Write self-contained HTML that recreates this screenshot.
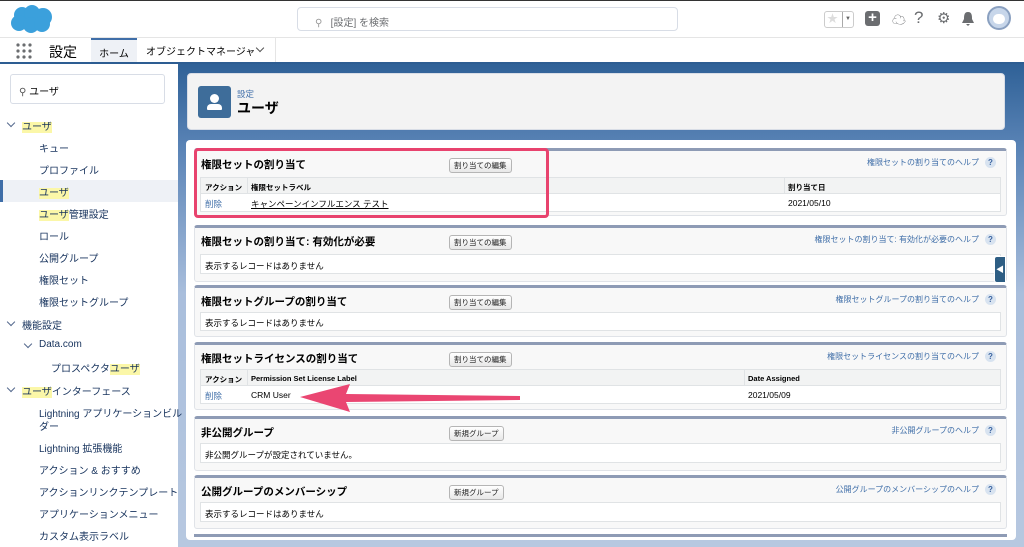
<!DOCTYPE html>
<html><head><meta charset="utf-8"><style>
*{box-sizing:border-box;margin:0;padding:0}
body{width:1024px;height:547px;overflow:hidden;font-family:"Liberation Sans","Noto Sans CJK JP",sans-serif;color:#16325c;background:#fff;position:relative}
.a{position:absolute}
.hl{background:#fbf7a8}
.side div.i{position:absolute;font-size:10px;color:#16325c;white-space:nowrap}
.chev{position:absolute;width:6px;height:6px;border-right:1px solid #54698d;border-bottom:1px solid #54698d;transform:rotate(45deg)}
.sec{position:absolute;left:194px;width:813px;background:#f8f8f8;border-top:3px solid #8e9bb5;border-radius:3px;border-left:1px solid #e0e3e8;border-right:1px solid #e0e3e8;border-bottom:1px solid #e0e3e8}
.sec .t{position:absolute;left:6px;top:6px;font-size:10.5px;font-weight:bold;color:#000}
.sec .b{position:absolute;left:254px;top:7px;font-size:7.5px;color:#222;border:1px solid #b5b5b5;border-radius:3px;background:linear-gradient(#fff,#e8e8e8);padding:1px 4px}
.sec .h{position:absolute;right:10px;top:6px;font-size:8px;color:#3f6ea8}
.sec .h span{display:inline-block;width:11px;height:11px;border-radius:6px;background:#d8e3f0;color:#3a64a0;font-size:8px;text-align:center;line-height:11px;margin-left:6px;font-weight:bold}
.tb{position:absolute;left:5px;right:5px;border:1px solid #e0e3e5;background:#fff;font-size:8.5px;color:#000}
.tb .hd{background:#f2f3f3;height:16px;border-bottom:1px solid #e0e3e5;font-weight:bold;font-size:7.5px;position:relative}
.tb .rw{height:17px;position:relative}
.tb span{position:absolute;top:4px}
</style></head><body>
<div class="a" style="left:0;top:0;width:1024px;height:1px;background:#333"></div>
<svg class="a" style="left:10px;top:4px" width="44" height="30" viewBox="0 0 44 30"><g fill="#3ba0dc"><circle cx="12" cy="11" r="8"/><circle cx="22" cy="9" r="8"/><circle cx="33" cy="13" r="9"/><circle cx="9" cy="19" r="8"/><circle cx="21" cy="21" r="8"/><circle cx="32" cy="20" r="8"/></g></svg>
<div class="a" style="left:297px;top:7px;width:381px;height:24px;border:1px solid #d8dde6;border-radius:4px;font-size:10px;color:#6b6d70;padding:6px 0 0 17px"><span style="color:#999">⚲</span>&nbsp;&nbsp;&nbsp;[設定] を検索</div>
<div class="a" style="left:824px;top:11px;width:30px;height:17px;border:1px solid #ccc;border-radius:3px;font-size:11px;color:#ddd;padding-left:2px;line-height:15px">★<span style="position:absolute;right:0;top:0;width:11px;height:15px;border-left:1px solid #aaa;color:#666;font-size:6px;text-align:center">▼</span></div>
<div class="a" style="left:865px;top:11px;width:15px;height:15px;background:#6b6d70;border-radius:3px;color:#fff;font-size:15px;line-height:14px;text-align:center;font-weight:bold">+</div>
<div class="a" style="left:892px;top:10px;font-size:14px;color:#6b6d70">☁</div>
<div class="a" style="left:914px;top:8px;font-size:17px;color:#6b6d70">?</div>
<div class="a" style="left:937px;top:9px;font-size:15px;color:#6b6d70">⚙</div>
<svg class="a" style="left:961px;top:11px" width="14" height="16"><path d="M7 1 C3 1 3 5 3 8 L1 12 L13 12 L11 8 C11 5 11 1 7 1Z M5 13 L9 13 L7 15Z" fill="#6b6d70"/></svg>
<div class="a" style="left:987px;top:6px;width:24px;height:24px;border-radius:12px;background:#c7d6ea;border:2px solid #8aa0c0"><div style="margin:6px auto 0;width:12px;height:10px;background:#fff;border-radius:5px"></div></div>
<div class="a" style="left:0;top:37px;width:1024px;height:1px;background:#e5e5e5"></div>
<svg class="a" style="left:16px;top:43px" width="16" height="16"><g fill="#6b6d70"><circle cx="2" cy="2" r="1.6"/><circle cx="8" cy="2" r="1.6"/><circle cx="14" cy="2" r="1.6"/><circle cx="2" cy="8" r="1.6"/><circle cx="8" cy="8" r="1.6"/><circle cx="14" cy="8" r="1.6"/><circle cx="2" cy="14" r="1.6"/><circle cx="8" cy="14" r="1.6"/><circle cx="14" cy="14" r="1.6"/></g></svg>
<div class="a" style="left:49px;top:42px;font-size:14px;color:#000">設定</div>
<div class="a" style="left:91px;top:38px;width:46px;height:25px;background:#eef1f6;border-top:2px solid #3f6ea8;font-size:10px;color:#000;text-align:center;padding-top:5px">ホーム</div>
<div class="a" style="left:146px;top:43px;font-size:10px;color:#000">オブジェクトマネージャ</div>
<div class="a" style="left:257px;top:45px;width:6px;height:6px;border-right:1px solid #555;border-bottom:1px solid #555;transform:rotate(45deg)"></div>
<div class="a" style="left:275px;top:38px;width:1px;height:25px;background:#e5e5e5"></div>
<div class="a" style="left:0;top:62px;width:1024px;height:2px;background:#2d5d92"></div>
<div class="a" style="left:178px;top:64px;width:846px;height:483px;background:linear-gradient(180deg,#2f6197 0px,#5d86b8 90px,#a9bedc 230px,#b7c8e0 483px)"></div>
<div class="a side" style="left:0;top:64px;width:178px;height:483px;background:#fff">
<div class="a" style="left:10px;top:10px;width:155px;height:30px;border:1px solid #d8dde6;border-radius:3px;font-size:10px;color:#000;padding:8px 0 0 8px"><span style="color:#555">⚲</span> ユーザ</div>
<div class="a" style="left:0;top:116px;width:178px;height:22px;background:#eef1f6"></div>
<div class="a" style="left:0;top:116px;width:3px;height:22px;background:#3f6ea8"></div>
<div class="chev" style="left:8px;top:56px"></div><div class="i" style="left:22px;top:54px"><span class="hl">ユーザ</span></div>
<div class="i" style="left:39px;top:76px">キュー</div>
<div class="i" style="left:39px;top:98px">プロファイル</div>
<div class="i" style="left:39px;top:120px"><span class="hl">ユーザ</span></div>
<div class="i" style="left:39px;top:142px"><span class="hl">ユーザ</span>管理設定</div>
<div class="i" style="left:39px;top:164px">ロール</div>
<div class="i" style="left:39px;top:186px">公開グループ</div>
<div class="i" style="left:39px;top:208px">権限セット</div>
<div class="i" style="left:39px;top:230px">権限セットグループ</div>
<div class="chev" style="left:8px;top:255px"></div><div class="i" style="left:22px;top:253px">機能設定</div>
<div class="chev" style="left:25px;top:277px"></div><div class="i" style="left:39px;top:275px">Data.com</div>
<div class="i" style="left:51px;top:296px">プロスペクタ<span class="hl">ユーザ</span></div>
<div class="chev" style="left:8px;top:321px"></div><div class="i" style="left:22px;top:319px"><span class="hl">ユーザ</span>インターフェース</div>
<div class="i" style="left:39px;top:341px">Lightning アプリケーションビル</div>
<div class="i" style="left:39px;top:354px">ダー</div>
<div class="i" style="left:39px;top:376px">Lightning 拡張機能</div>
<div class="i" style="left:39px;top:398px">アクション &amp; おすすめ</div>
<div class="i" style="left:39px;top:420px">アクションリンクテンプレート</div>
<div class="i" style="left:39px;top:442px">アプリケーションメニュー</div>
<div class="i" style="left:39px;top:464px">カスタム表示ラベル</div>
</div>
<div class="a" style="left:187px;top:73px;width:818px;height:57px;background:#f3f3f3;border:1px solid #d8dde6;border-radius:4px"></div>
<div class="a" style="left:198px;top:86px;width:33px;height:32px;background:#3e6d9a;border-radius:3px"><div style="position:absolute;left:12px;top:8px;width:9px;height:9px;border-radius:5px;background:#fff"></div><div style="position:absolute;left:9px;top:18px;width:15px;height:6px;border-radius:4px 4px 1px 1px;background:#fff"></div></div>
<div class="a" style="left:237px;top:88px;font-size:8.5px;color:#3f6ea8">設定</div>
<div class="a" style="left:237px;top:98px;font-size:14px;font-weight:bold;color:#000">ユーザ</div>
<div class="a" style="left:186px;top:140px;width:830px;height:400px;background:#fff;border-radius:4px"></div>
<div class="sec" style="top:148px;height:68px"><div class="t">権限セットの割り当て</div><div class="b">割り当ての編集</div><div class="h">権限セットの割り当てのヘルプ<span>?</span></div>
<div class="tb" style="top:26px"><div class="hd"><span style="left:4px">アクション</span><span style="left:46px;border-left:1px solid #e0e3e5;padding-left:3px;top:0;height:15px;padding-top:4px">権限セットラベル</span><span style="left:583px;border-left:1px solid #e0e3e5;padding-left:3px;top:0;height:15px;padding-top:4px">割り当て日</span></div><div class="rw"><span style="left:4px;color:#3f6ea8">削除</span><span style="left:50px;text-decoration:underline">キャンペーンインフルエンス テスト</span><span style="left:587px">2021/05/10</span></div></div></div>
<div class="sec" style="top:225px;height:57px"><div class="t">権限セットの割り当て: 有効化が必要</div><div class="b">割り当ての編集</div><div class="h">権限セットの割り当て: 有効化が必要のヘルプ<span>?</span></div>
<div class="tb" style="top:26px;height:20px"><span style="left:4px;top:5px">表示するレコードはありません</span></div></div>
<div class="sec" style="top:285px;height:52px"><div class="t">権限セットグループの割り当て</div><div class="b">割り当ての編集</div><div class="h">権限セットグループの割り当てのヘルプ<span>?</span></div>
<div class="tb" style="top:24px;height:19px"><span style="left:4px;top:4px">表示するレコードはありません</span></div></div>
<div class="sec" style="top:342px;height:68px"><div class="t">権限セットライセンスの割り当て</div><div class="b">割り当ての編集</div><div class="h">権限セットライセンスの割り当てのヘルプ<span>?</span></div>
<div class="tb" style="top:24px"><div class="hd"><span style="left:4px">アクション</span><span style="left:46px;border-left:1px solid #e0e3e5;padding-left:3px;top:0;height:15px;padding-top:4px">Permission Set License Label</span><span style="left:543px;border-left:1px solid #e0e3e5;padding-left:3px;top:0;height:15px;padding-top:4px">Date Assigned</span></div><div class="rw"><span style="left:4px;color:#3f6ea8">削除</span><span style="left:50px">CRM User</span><span style="left:547px">2021/05/09</span></div></div></div>
<div class="sec" style="top:416px;height:55px"><div class="t">非公開グループ</div><div class="b">新規グループ</div><div class="h">非公開グループのヘルプ<span>?</span></div>
<div class="tb" style="top:24px;height:20px"><span style="left:4px;top:5px">非公開グループが設定されていません。</span></div></div>
<div class="sec" style="top:475px;height:54px"><div class="t">公開グループのメンバーシップ</div><div class="b">新規グループ</div><div class="h">公開グループのメンバーシップのヘルプ<span>?</span></div>
<div class="tb" style="top:24px;height:20px"><span style="left:4px;top:5px">表示するレコードはありません</span></div></div>
<div class="a" style="left:194px;top:534px;width:813px;height:3px;background:#8e9bb5"></div>
<div class="a" style="left:994px;top:256px;width:12px;height:27px;background:#2e5e84;border:1px solid #fff;border-radius:3px 0 0 3px;color:#fff;font-size:8px;line-height:25px;text-align:center">◀</div>
<div class="a" style="left:194px;top:148px;width:355px;height:70px;border:3px solid #e8436e;border-radius:4px"></div>
<svg class="a" style="left:290px;top:380px" width="240" height="36"><path d="M10 17 L60 4 L56 14 L230 16 L230 20 L56 22 L60 32 Z" fill="#ea4672"/></svg>
</body></html>
